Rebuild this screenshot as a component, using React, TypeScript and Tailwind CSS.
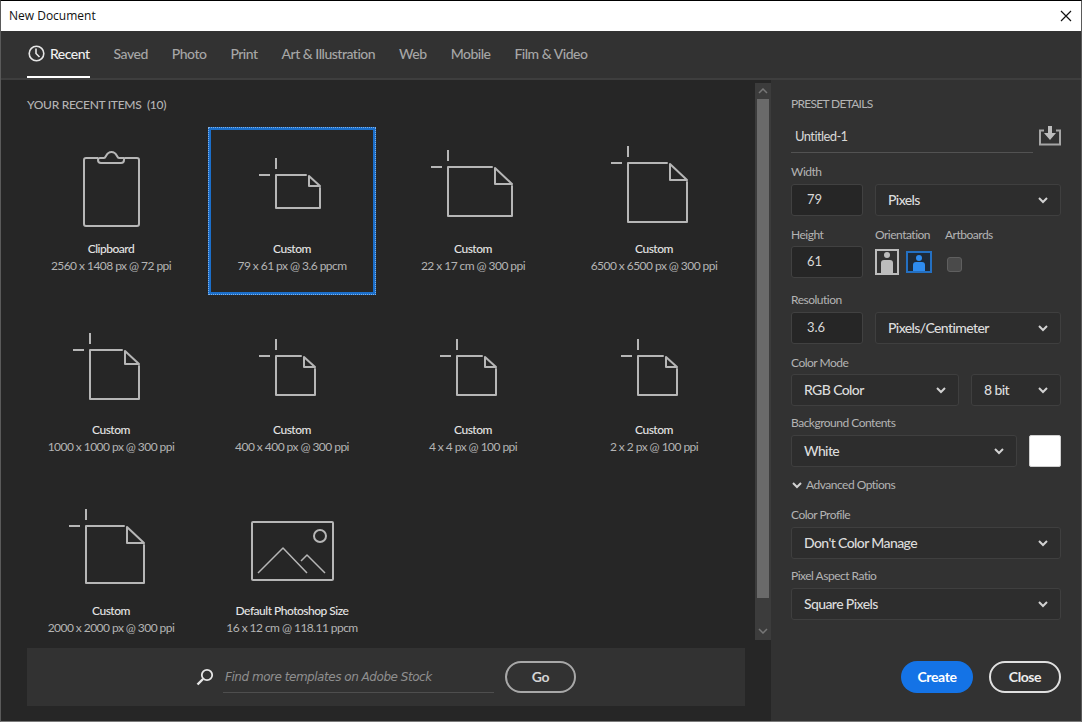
import React from 'react';

const tabs = ['Saved', 'Photo', 'Print', 'Art & Illustration', 'Web', 'Mobile', 'Film & Video'];

interface DocProps {
  l: number;
  t: number;
  w: number;
  h: number;
  fold: number;
}

const Page: React.FC<DocProps> = ({ l, t, w, h, fold }) => {
  const r = l + w;
  const b = t + h;
  return (
    <g fill="none" stroke="#b6b6b6" strokeWidth="2" strokeLinejoin="round" strokeLinecap="round">
      <path d={`M${l} ${t - 17}V${t - 6}M${l - 17} ${t}H${l - 6}`} strokeLinecap="butt" />
      <path d={`M${r - fold - 3} ${t}H${l}V${b}H${r}V${t + fold + 2}`} />
      <path d={`M${r - fold} ${t + 1}L${r} ${t + fold}H${r - fold}Z`} />
    </g>
  );
};

const Clipboard = () => (
  <g fill="none" stroke="#b6b6b6" strokeWidth="2" strokeLinejoin="round">
    <path d="M71 31H59Q57 31 57 33V97Q57 99 59 99H110Q112 99 112 97V33Q112 31 110 31H98Q97 31 97 33Q97 36 94 36H74Q71 36 71 33Q71 31 73 31H77Q78 31 79 29Q81 25 84.500 25Q88 25 90 29Q91 31 92 31H97" />
  </g>
);

const Photo = () => (
  <g fill="none" stroke="#b6b6b6" strokeWidth="2" strokeLinejoin="round">
    <rect x="44" y="33" width="81" height="58" rx="1" />
    <circle cx="112" cy="47" r="6" />
    <path d="M50 84L75 59L99 84M93 72L99 66L117 84" strokeWidth="1.500" />
  </g>
);

interface Item {
  title: string;
  sub: string;
  art: React.ReactNode;
  selected?: boolean;
}

const items: Item[] = [
  { title: 'Clipboard', sub: '2560 x 1408 px @ 72 ppi', art: <Clipboard /> },
  { title: 'Custom', sub: '79 x 61 px @ 3.6 ppcm', art: <Page l={68} t={48} w={44} h={33} fold={11} />, selected: true },
  { title: 'Custom', sub: '22 x 17 cm @ 300 ppi', art: <Page l={59} t={40} w={64} h={49} fold={17} /> },
  { title: 'Custom', sub: '6500 x 6500 px @ 300 ppi', art: <Page l={58} t={36} w={59} h={59} fold={17} /> },
  { title: 'Custom', sub: '1000 x 1000 px @ 300 ppi', art: <Page l={63} t={42} w={49} h={49} fold={14} /> },
  { title: 'Custom', sub: '400 x 400 px @ 300 ppi', art: <Page l={68} t={48} w={39} h={39} fold={11} /> },
  { title: 'Custom', sub: '4 x 4 px @ 100 ppi', art: <Page l={68} t={48} w={39} h={39} fold={11} /> },
  { title: 'Custom', sub: '2 x 2 px @ 100 ppi', art: <Page l={68} t={48} w={39} h={39} fold={11} /> },
  { title: 'Custom', sub: '2000 x 2000 px @ 300 ppi', art: <Page l={59} t={37} w={58} h={57} fold={17} /> },
  { title: 'Default Photoshop Size', sub: '16 x 12 cm @ 118.11 ppcm', art: <Photo /> },
];

const Chevron = () => (
  <svg width="10" height="7" viewBox="0 0 10 7" className="shrink-0">
    <path d="M1 1L5 5L9 1" fill="none" stroke="#d2d2d2" strokeWidth="2" />
  </svg>
);

const Label: React.FC<{ children: React.ReactNode; className?: string }> = ({ children, className }) => (
  <div className={`h-4 text-[12px] leading-4 tracking-[-0.5px] text-[#b4b4b4] whitespace-nowrap ${className ?? ''}`}>{children}</div>
);

const Select: React.FC<{ value: string; className?: string }> = ({ value, className }) => (
  <div className={`h-8 flex items-center justify-between pl-[12px] pr-[12px] bg-[#2d2d2d] border border-[#3f3f3f] rounded-[3px] text-[14px] tracking-[-0.6px] font-medium text-[#dcdcdc] ${className ?? ''}`}>
    <span className="pb-px">{value}</span>
    <Chevron />
  </div>
);

const NumberBox: React.FC<{ value: string; className?: string }> = ({ value, className }) => (
  <div className={`h-8 w-[72px] flex items-center pl-[15px] bg-[#262626] border border-[#414141] rounded-[3px] text-[13px] text-[#d8d8d8] ${className ?? ''}`}>
    {value}
  </div>
);

export default function App() {
  return (
    <div className="w-[1082px] h-[722px] flex flex-col overflow-hidden border-t border-t-black border-x border-x-[#5a5a5a] border-b border-b-[#7a7a7a] bg-[#262626] font-['Lato','Noto_Sans',sans-serif]">
      <div className="h-[30px] shrink-0 bg-white flex items-center justify-between pl-2 pr-[9px] text-[12px] text-[#111] font-['Open_Sans',sans-serif]">
        <span>New Document</span>
        <svg width="12" height="12" viewBox="0 0 12 12">
          <path d="M1 1L11 11M11 1L1 11" stroke="#111" strokeWidth="1.200" />
        </svg>
      </div>

      <div className="h-[49px] shrink-0 bg-[#323232] border-b-2 border-b-[#3e3e3e] flex items-stretch pl-[26px] gap-6 text-[14px] tracking-[-0.5px] font-medium text-[#a6a6a6]">
        <div className="h-[47px] flex items-center gap-[5px] pl-px text-[#f0f0f0] border-b-2 border-white">
          <svg width="17" height="17" viewBox="0 0 17 17">
            <circle cx="8.500" cy="8.500" r="7.300" fill="none" stroke="#e6e6e6" strokeWidth="1.600" />
            <path d="M8 3.500V8.500L11.500 12" fill="none" stroke="#e6e6e6" strokeWidth="1.600" />
          </svg>
          <span className="pb-px">Recent</span>
        </div>
        {tabs.map(t => (
          <div key={t} className="h-[47px] pb-[3px] flex items-center">{t}</div>
        ))}
      </div>

      <div className="flex-1 flex min-h-0">
        <div className="w-[770px] shrink-0 flex">
          <div className="w-[754px] shrink-0 flex flex-col">
            <div className="flex-1 min-h-0 overflow-hidden pl-[26px] pt-[17px]">
              <div className="h-4 text-[12px] leading-4 font-medium tracking-[-0.3px] text-[#b4b4b4]">YOUR RECENT ITEMS&nbsp; (10)</div>
              <div className="mt-[14px] grid grid-cols-[168px_168px_168px_168px] auto-rows-[168px] gap-[13px]">
                {items.map((item, i) => (
                  <div
                    key={i}
                    className={`flex flex-col items-center ${item.selected ? 'shadow-[inset_0_0_0_3px_#1b6ec9] outline-1 outline-dotted -outline-offset-1 outline-[#7fb0e6]' : ''}`}
                  >
                    <svg width="168" height="112" viewBox="0 0 168 112" className="shrink-0">
                      {item.art}
                    </svg>
                    <div className="h-[18px] pt-px text-[12px] leading-[18px] tracking-[-0.5px] font-medium text-[#e4e4e4] whitespace-nowrap">{item.title}</div>
                    <div className="h-[18px] text-[12px] leading-[18px] tracking-[-0.55px] text-[#b4b4b4] whitespace-nowrap">{item.sub}</div>
                  </div>
                ))}
              </div>
            </div>
            <div className="ml-[26px] mb-[15px] h-[58px] w-[718px] shrink-0 bg-[#323232] flex items-center pl-[169px]">
              <svg width="18" height="18" viewBox="0 0 18 18" className="shrink-0">
                <circle cx="11" cy="7" r="5.200" fill="none" stroke="#e6e6e6" strokeWidth="1.800" />
                <path d="M7 11L1.500 16.500" stroke="#e6e6e6" strokeWidth="2.400" />
              </svg>
              <div className="ml-[9px] w-[271px] h-8 border-b border-b-[#4e4e4e] flex items-center pl-[2px] text-[12px] italic tracking-[-0.47px] text-[#8f8f8f] font-['DejaVu_Sans',sans-serif] whitespace-nowrap">
                Find more templates on Adobe Stock
              </div>
              <div className="ml-[11px] w-[71px] h-8 pb-[2px] rounded-full border-2 border-[#a8a8a8] flex items-center justify-center text-[14px] tracking-[-0.3px] font-bold text-[#d4d4d4]">Go</div>
            </div>
          </div>

          <div className="w-4 mt-[3px] mb-[81px] shrink-0 bg-[#3c3c3c] flex flex-col items-center">
            <div className="h-4 flex items-center justify-center shrink-0">
              <svg width="10" height="6" viewBox="0 0 10 6">
                <path d="M1 5L5 1L9 5" fill="none" stroke="#777" strokeWidth="1.500" />
              </svg>
            </div>
            <div className="w-3 h-[499px] shrink-0 bg-[#6a6a6a]" />
            <div className="flex-1 flex items-end pb-[6px]">
              <svg width="10" height="6" viewBox="0 0 10 6">
                <path d="M1 1L5 5L9 1" fill="none" stroke="#777" strokeWidth="1.500" />
              </svg>
            </div>
          </div>
        </div>

        <div className="flex-1 bg-[#323232] pl-5 pr-5 pt-4">
          <Label className="tracking-[-0.7px]">PRESET DETAILS</Label>
          <div className="mt-2 flex items-center justify-between">
            <div className="w-[242px] h-[33px] flex items-center pl-1 pt-px border-b border-b-[#525252] text-[13px] tracking-[-0.6px] text-[#d8d8d8]">Untitled-1</div>
            <svg width="22" height="20" viewBox="0 0 22 20" className="mb-[2px]">
              <path d="M5 4.500H1V18.500H21V4.500H17" fill="none" stroke="#a6a6a6" strokeWidth="2" />
              <path d="M9 0H13V7H17L11 14L5 7H9Z" fill="#bdbdbd" />
            </svg>
          </div>

          <Label className="mt-[11px]">Width</Label>
          <div className="mt-1 flex gap-3">
            <NumberBox value="79" />
            <Select value="Pixels" className="flex-1" />
          </div>

          <div className="mt-[11px] flex">
            <div className="w-[72px]">
              <Label>Height</Label>
              <NumberBox value="61" className="mt-[3px]" />
            </div>
            <div className="ml-3 w-[70px]">
              <Label>Orientation</Label>
              <div className="mt-[6px] flex items-center gap-[7px]">
                <svg width="24" height="26" viewBox="0 0 24 26">
                  <rect x="1" y="1" width="22" height="24" fill="#323232" stroke="#bdbdbd" strokeWidth="2" />
                  <circle cx="12" cy="6" r="3" fill="#bdbdbd" />
                  <path d="M6 24V14Q6 11 9 11H15Q18 11 18 14V24Z" fill="#bdbdbd" />
                </svg>
                <svg width="26" height="22" viewBox="0 0 26 22">
                  <rect x="1" y="1" width="24" height="20" fill="#1e2a38" stroke="#2470c2" strokeWidth="2" />
                  <circle cx="13" cy="7" r="3" fill="#2e8cf0" />
                  <path d="M7 20V14Q7 11 10 11H16Q19 11 19 14V20Z" fill="#2e8cf0" />
                </svg>
              </div>
            </div>
            <div>
              <Label>Artboards</Label>
              <div className="mt-[14px] ml-[2px] w-[15px] h-[15px] rounded-[3px] bg-[#4a4a4a] border border-[#5f5f5f]" />
            </div>
          </div>

          <Label className="mt-[14px]">Resolution</Label>
          <div className="mt-1 flex gap-3">
            <NumberBox value="3.6" />
            <Select value="Pixels/Centimeter" className="flex-1" />
          </div>

          <Label className="mt-[11px]">Color Mode</Label>
          <div className="mt-[3px] flex gap-3">
            <Select value="RGB Color" className="w-[168px]" />
            <Select value="8 bit" className="flex-1" />
          </div>

          <Label className="mt-[9px]">Background Contents</Label>
          <div className="mt-1 flex gap-3">
            <Select value="White" className="flex-1" />
            <div className="w-8 h-8 bg-white rounded-[2px] border border-[#d0d0d0]" />
          </div>

          <div className="mt-[10px] h-4 flex items-center gap-[4px] pl-[1px] text-[12px] tracking-[-0.5px] text-[#b4b4b4]">
            <Chevron />
            <span>Advanced Options</span>
          </div>

          <Label className="mt-[14px]">Color Profile</Label>
          <Select value="Don't Color Manage" className="mt-1" />

          <Label className="mt-[9px]">Pixel Aspect Ratio</Label>
          <Select value="Square Pixels" className="mt-1" />

          <div className="mt-[41px] flex justify-end gap-4">
            <div className="w-[72px] h-8 pb-[2px] rounded-full bg-[#1473e6] flex items-center justify-center text-[14px] tracking-[-0.4px] font-bold text-white">Create</div>
            <div className="w-[72px] h-8 pb-[2px] rounded-full border-2 border-[#e0e0e0] flex items-center justify-center text-[14px] tracking-[-0.4px] font-bold text-[#ececec]">Close</div>
          </div>
        </div>
      </div>
    </div>
  );
}
